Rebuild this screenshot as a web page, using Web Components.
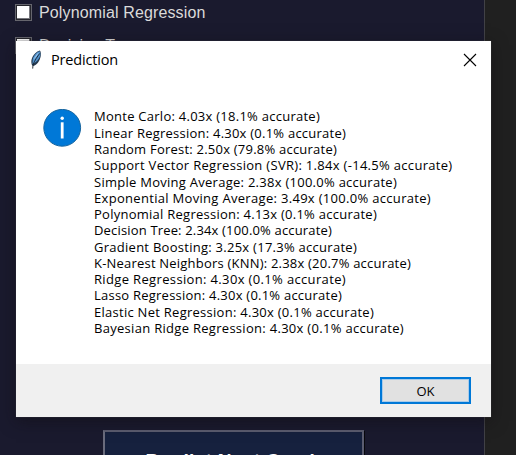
<!DOCTYPE html>
<html lang="en">
<head>
<meta charset="utf-8">
<title>Prediction</title>
<style>
html, body { margin: 0; width: 516px; height: 455px; overflow: hidden; background: #202020; }
</style>
</head>
<body>
<forecast-desktop></forecast-desktop>
<script>
class FitText extends HTMLElement {
  connectedCallback() {
    const root = this.attachShadow({ mode: 'open' });
    root.innerHTML = `<style>
      :host { display: block; white-space: pre; }
      span { display: inline-block; }
    </style><span></span>`;
    const span = root.querySelector('span');
    span.textContent = this.getAttribute('text');
    const want = Number(this.getAttribute('width'));
    const have = span.getBoundingClientRect().width;
    span.style.letterSpacing = (want - have) / span.textContent.length + 'px';
  }
}
customElements.define('fit-text', FitText);

class CheckRow extends HTMLElement {
  connectedCallback() {
    this.attachShadow({ mode: 'open' }).innerHTML = `<style>
      :host { display: flex; align-items: center; gap: 7px; height: 32px; color: #dadada;
              font: 16px/20px "Liberation Sans", Arial, sans-serif; }
      i { box-sizing: border-box; width: 17px; height: 17px; background: #fff; border: 1px solid #66666e;
          box-shadow: inset 0 0 0 1px #26262c, inset -2px -2px 0 #77777d; }
      ::slotted(*) { margin-top: 1px; }
    </style><i></i><slot></slot>`;
  }
}
customElements.define('check-row', CheckRow);

class PredictButton extends HTMLElement {
  connectedCallback() {
    this.attachShadow({ mode: 'open' }).innerHTML = `<style>
      :host { display: flex; justify-content: center; box-sizing: border-box; width: 261px; height: 60px;
              padding-top: 17px; background: #16213e; color: #fff; border: 2px solid #5b5d70;
              border-left-color: #6a6c7d; box-shadow: 1px 1px 0 #08080d;
              font: bold 19px/24px "Liberation Sans", Arial, sans-serif; }
    </style><slot></slot>`;
  }
}
customElements.define('predict-button', PredictButton);

class MessageDialog extends HTMLElement {
  connectedCallback() {
    this.attachShadow({ mode: 'open' }).innerHTML = `<style>
      :host { display: flex; flex-direction: column; width: 475px; height: 376px; background: #fff; color: #000;
              box-shadow: 0 0 1px #4a4a50, 0 4px 15px rgba(16,12,16,.5);
              font-family: "Open Sans", "Noto Sans", sans-serif; }
      header { display: flex; align-items: center; height: 38px; padding: 0 14px 0 13px; box-sizing: border-box; font-size: 14.5px; }
      header fit-text { margin-left: 8px; flex: 1; line-height: 20px; }
      main { display: flex; flex: 1; gap: 12px; padding: 29px 0 0 27px; }
      .lines { margin-top: .4px; font-size: 13px; line-height: 16.28px; }
      footer { display: flex; justify-content: flex-end; box-sizing: border-box; height: 53px; padding: 13px 20px 0 0;
               background: #f0f0f0; }
      button { display: flex; align-items: center; justify-content: center; box-sizing: border-box; width: 91px; height: 27px;
               padding: 1px 0 0; background: #e1e1e1; border: 2px solid #0078d7; outline: 0; color: #000;
               box-shadow: inset 0 0 0 1px #a9cbe9; font: 13px/16px "Open Sans", "Noto Sans", sans-serif; }
      svg { display: block; flex: none; }
      .info { margin-top: 1px; }
    </style>
    <header>
      <svg width="14" height="22" viewBox="0 0 14 22">
        <path d="M10.9 1.6C7.6 2.3 4 6.1 2.7 10c-.6 2.2-.4 4 .2 5.9l1.3 1.1c3.7-.7 6.8-5.5 7.5-9.7.4-2.4.2-4.5-.8-5.7Z" fill="#24384e"/>
        <path d="M10.5 2.3C7.2 3.6 4.4 7.2 3.7 10.6l-.2 4.6c3.8-2 6.9-5.2 7.7-8.7.4-1.7.2-3-.7-4.2Z" fill="#5292cd"/>
        <path d="M10.8 4.4C8.6 7.3 5.4 11.6 4 16l-.3 3.6" fill="none" stroke="#17202a" stroke-width=".9"/>
        <path d="M9.1 4.2 5.3 9.6" stroke="#a8cff0" stroke-width=".9"/>
      </svg>
      <fit-text text="Prediction" width="67"></fit-text>
      <svg width="14" height="14" viewBox="0 0 14 14"><path d="M1 1 13 13M13 1 1 13" stroke="#000" stroke-width="1.1"/></svg>
    </header>
    <main>
      <svg class="info" width="39" height="39" viewBox="0 0 39 39">
        <circle cx="19.2" cy="18.8" r="18.4" fill="#0078d7" stroke="#17659f" stroke-width="1"/>
        <circle cx="19.2" cy="9.2" r="1.7" fill="#fff"/><path d="M17.8 13.3h2.8v16.2h-2.8z" fill="#fff"/>
      </svg>
      <div class="lines"></div>
    </main>
    <footer><button>OK</button></footer>`;
    const rows = [
      ['Monte Carlo: 4.03x (18.1% accurate)', 226],
      ['Linear Regression: 4.30x (0.1% accurate)', 252],
      ['Random Forest: 2.50x (79.8% accurate)', 243],
      ['Support Vector Regression (SVR): 1.84x (-14.5% accurate)', 358.5],
      ['Simple Moving Average: 2.38x (100.0% accurate)', 303],
      ['Exponential Moving Average: 3.49x (100.0% accurate)', 337],
      ['Polynomial Regression: 4.13x (0.1% accurate)', 283],
      ['Decision Tree: 2.34x (100.0% accurate)', 238],
      ['Gradient Boosting: 3.25x (17.3% accurate)', 263],
      ['K-Nearest Neighbors (KNN): 2.38x (20.7% accurate)', 317],
      ['Ridge Regression: 4.30x (0.1% accurate)', 252],
      ['Lasso Regression: 4.30x (0.1% accurate)', 248],
      ['Elastic Net Regression: 4.30x (0.1% accurate)', 280],
      ['Bayesian Ridge Regression: 4.30x (0.1% accurate)', 310]
    ];
    const box = this.shadowRoot.querySelector('.lines');
    for (const [text, width] of rows) {
      const line = document.createElement('fit-text');
      line.setAttribute('text', text);
      line.setAttribute('width', width);
      box.append(line);
    }
  }
}
customElements.define('message-dialog', MessageDialog);

class ForecastDesktop extends HTMLElement {
  connectedCallback() {
    this.attachShadow({ mode: 'open' }).innerHTML = `<style>
      :host { display: block; position: relative; width: 516px; height: 455px; overflow: hidden; background: #202020; }
      .app { display: flex; flex-direction: column; justify-content: space-between; box-sizing: border-box;
             width: 485px; height: 490px; background: #1a1a2e; border-right: 1px solid #414146; }
      .checks { padding: 0 0 0 15px; margin-top: -4px; }
      .checks check-row + check-row { margin-top: 1px; }
      predict-button { margin-left: 103px; }
      message-dialog { position: absolute; left: 16px; top: 41px; }
    </style>
    <div class="app">
      <div class="checks">
        <check-row><fit-text text="Polynomial Regression" width="166.5"></fit-text></check-row>
        <check-row><fit-text text="Decision Tree" width="99"></fit-text></check-row>
      </div>
      <predict-button><fit-text text="Predict Next Crash" width="176"></fit-text></predict-button>
    </div>
    <message-dialog></message-dialog>`;
  }
}
customElements.define('forecast-desktop', ForecastDesktop);
</script>
</body>
</html>
